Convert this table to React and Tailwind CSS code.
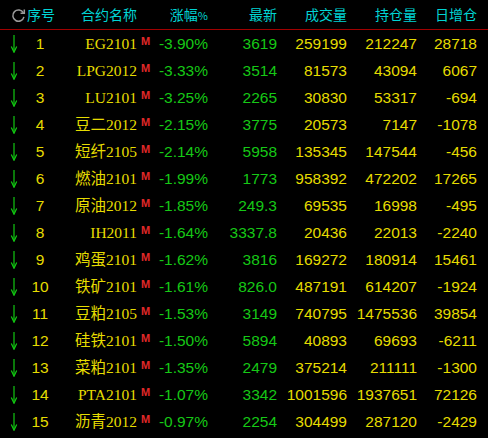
import React from "react";

const rows = [
  ["1", "EG2101", "-3.90%", "3619", "259199", "212247", "28718"],
  ["2", "LPG2012", "-3.33%", "3514", "81573", "43094", "6067"],
  ["3", "LU2101", "-3.25%", "2265", "30830", "53317", "-694"],
  ["4", "豆二2012", "-2.15%", "3775", "20573", "7147", "-1078"],
  ["5", "短纤2105", "-2.14%", "5958", "135345", "147544", "-456"],
  ["6", "燃油2101", "-1.99%", "1773", "958392", "472202", "17265"],
  ["7", "原油2012", "-1.85%", "249.3", "69535", "16998", "-495"],
  ["8", "IH2011", "-1.64%", "3337.8", "20436", "22013", "-2240"],
  ["9", "鸡蛋2101", "-1.62%", "3816", "169272", "180914", "15461"],
  ["10", "铁矿2101", "-1.61%", "826.0", "487191", "614207", "-1924"],
  ["11", "豆粕2105", "-1.53%", "3149", "740795", "1475536", "39854"],
  ["12", "硅铁2101", "-1.50%", "5894", "40893", "69693", "-6211"],
  ["13", "菜粕2101", "-1.35%", "2479", "375214", "211111", "-1300"],
  ["14", "PTA2101", "-1.07%", "3342", "1001596", "1937651", "72126"],
  ["15", "沥青2012", "-0.97%", "2254", "304499", "287120", "-2429"],
];

const sans = { fontFamily: '"Liberation Sans", Arial, sans-serif' };
const serif = { fontFamily: '"Liberation Serif", "Noto Sans CJK SC", serif' };
const cjk = { fontFamily: '"Noto Sans CJK SC", "Liberation Sans", sans-serif' };

function Arrow() {
  return (
    <svg width="10" height="18" viewBox="0 0 10 18">
      <line x1="5" y1="0" x2="5" y2="16.5" stroke="#12c812" strokeWidth="1.2" />
      <path d="M2.3 11.5 L5 17.3 L7.7 11.5" fill="none" stroke="#12c812" strokeWidth="1.2" />
    </svg>
  );
}

function Refresh() {
  return (
    <svg width="15" height="15" viewBox="0 0 16 16">
      <path d="M13.2 5.2 A6 6 0 1 0 13.8 9.5" fill="none" stroke="#9a9a9a" strokeWidth="1.6" />
      <path d="M10.2 5.6 L14.2 5.6 L14.2 1.6" fill="none" stroke="#9a9a9a" strokeWidth="1.6" />
    </svg>
  );
}

export default function App() {
  return (
    <div className="w-[488px] h-[438px] bg-black overflow-hidden select-none">
      <div className="flex h-[29px] items-center text-[14px] text-[#00d4d4]" style={cjk}>
        <div className="w-[27px] flex justify-end pr-[1px] pt-[1px]">
          <Refresh />
        </div>
        <div className="w-[28px]">序号</div>
        <div className="w-[82px] text-right">合约名称</div>
        <div className="w-[15px]" />
        <div className="w-[56px] text-right">
          涨幅<span className="text-[11px]">%</span>
        </div>
        <div className="w-[69px] text-right">最新</div>
        <div className="w-[70px] text-right">成交量</div>
        <div className="w-[70px] text-right">持仓量</div>
        <div className="w-[60px] text-right">日增仓</div>
      </div>
      <div className="h-[1px] bg-[#a00000]" />
      {rows.map((r) => (
        <div key={r[0]} className="flex h-[27px] items-center text-[15.5px]" style={sans}>
          <div className="w-[27px] flex justify-center pl-[1px]">
            <Arrow />
          </div>
          <div className="w-[26px] text-center text-[#e6dc00]">{r[0]}</div>
          <div className="w-[84px] text-right text-[#e6dc00]" style={serif}>
            {r[1]}
          </div>
          <div className="w-[15px] self-start pt-[6px] pl-[4px] text-[11px] leading-none font-bold text-[#e02828]" style={sans}>
            M
          </div>
          <div className="w-[56px] text-right text-[#16c816]">{r[2]}</div>
          <div className="w-[69px] text-right text-[#16c816]">{r[3]}</div>
          <div className="w-[70px] text-right text-[#e6dc00]">{r[4]}</div>
          <div className="w-[70px] text-right text-[#e6dc00]">{r[5]}</div>
          <div className="w-[60px] text-right text-[#e6dc00]">{r[6]}</div>
        </div>
      ))}
    </div>
  );
}
